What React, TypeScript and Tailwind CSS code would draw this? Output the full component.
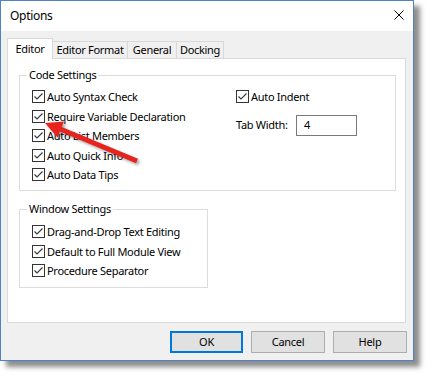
import React from "react";

const font = { fontFamily: '"Noto Sans", "Open Sans", sans-serif' };

const Check = () => (
  <span className="w-[13px] h-[13px] border border-[#333333] bg-white flex-shrink-0 flex items-center justify-center">
    <svg width="11" height="11" viewBox="0 0 11 11">
      <path d="M1.5 5.5 L4 8 L9.5 2.5" fill="none" stroke="#3c3c3c" strokeWidth="1.2" />
    </svg>
  </span>
);

const Row = ({ label }: { label: string }) => (
  <div className="flex items-center h-[19.5px]">
    <Check />
    <span className="ml-[2px] text-[11px] tracking-[-0.3px] leading-none text-black whitespace-nowrap">
      {label}
    </span>
  </div>
);

const Group = ({
  title,
  className,
  children,
}: {
  title: string;
  className: string;
  children: React.ReactNode;
}) => (
  <div className={`relative border border-[#dcdcdc] ${className}`}>
    <span className="absolute -top-[9px] left-[7px] bg-white px-[2px] text-[11px] tracking-[-0.3px] leading-[16px] text-black whitespace-nowrap">
      {title}
    </span>
    {children}
  </div>
);

const tabs = [
  { name: "Editor Format", w: "w-[76px]" },
  { name: "General", w: "w-[50px]" },
  { name: "Docking", w: "w-[48px]" },
];

const txt = "text-[11px] tracking-[-0.3px] text-black whitespace-nowrap";

export default function App() {
  return (
    <div className="relative w-[429px] h-[376px] bg-white" style={font}>
      {/* Dialog window */}
      <div className="w-[414px] h-[361px] border border-[#5082c8] bg-[#f0f0f0] shadow-[6px_6px_5px_rgba(0,0,0,0.45)] flex flex-col">
        {/* Title bar */}
        <div className="h-[30px] bg-white flex items-center justify-between pl-[9px] pr-[9px]">
          <span className={`${txt} text-[12px]`}>Options</span>
          <svg width="10" height="10" viewBox="0 0 10 10" className="-mt-[3px]">
            <path d="M0.5 0.5 L9.5 9.5 M9.5 0.5 L0.5 9.5" stroke="#000" strokeWidth="1" />
          </svg>
        </div>

        {/* Body */}
        <div className="flex-1 flex flex-col pt-[7px] pl-[6px] pr-[7px]">
          {/* Tabs */}
          <div className="flex items-end h-[20px]">
            <div className={`relative z-10 w-[46px] h-[21px] -mb-px bg-white border border-b-0 border-[#d9d9d9] flex items-center justify-center ${txt}`}>
              Editor
            </div>
            {tabs.map((t) => (
              <div
                key={t.name}
                className={`${t.w} -ml-px h-[17px] bg-[#f0f0f0] border border-b-0 border-[#d9d9d9] flex items-center justify-center ${txt}`}
              >
                {t.name}
              </div>
            ))}
          </div>

          {/* Tab panel */}
          <div className="h-[265px] bg-white border border-[#d9d9d9] pt-[16px] pl-[11px]">
            <Group title="Code Settings" className="w-[377px] h-[116px] pt-[11px] pl-[12px] flex">
              <div className="w-[204px] flex flex-col">
                <Row label="Auto Syntax Check" />
                <Row label="Require Variable Declaration" />
                <Row label="Auto List Members" />
                <Row label="Auto Quick Info" />
                <Row label="Auto Data Tips" />
              </div>
              <div className="flex flex-col">
                <Row label="Auto Indent" />
                <div className="flex items-center mt-[8px]">
                  <span className={`${txt} w-[60px]`}>Tab Width:</span>
                  <div className={`w-[61px] h-[21px] border border-[#7a7a7a] bg-white flex items-center pl-[7px] ${txt}`}>
                    4
                  </div>
                </div>
              </div>
            </Group>

            <Group title="Window Settings" className="mt-[18px] w-[189px] h-[79px] pt-[12px] pl-[12px] flex flex-col">
              <Row label="Drag-and-Drop Text Editing" />
              <Row label="Default to Full Module View" />
              <Row label="Procedure Separator" />
            </Group>
          </div>

          {/* Buttons */}
          <div className="flex justify-end gap-[8px] mt-[8px] -mr-px">
            <button className={`w-[73px] h-[22px] bg-[#e1e1e1] border-2 border-[#0078d7] ${txt}`}>
              OK
            </button>
            <button className={`w-[74px] h-[22px] bg-[#e1e1e1] border border-[#adadad] ${txt}`}>
              Cancel
            </button>
            <button className={`w-[74px] h-[22px] bg-[#e1e1e1] border border-[#adadad] ${txt}`}>
              Help
            </button>
          </div>
        </div>
      </div>

      {/* Red annotation arrow */}
      <svg
        className="absolute left-0 top-0 pointer-events-none"
        width="429"
        height="376"
        viewBox="0 0 429 376"
        style={{ filter: "drop-shadow(2px 2px 1.5px rgba(0,0,0,0.35))" }}
      >
        <line x1="137" y1="161" x2="59" y2="128.5" stroke="#e8231f" strokeWidth="5" />
        <polygon points="45,123 64,121.5 57.5,137.5" fill="#e8231f" />
      </svg>
    </div>
  );
}
